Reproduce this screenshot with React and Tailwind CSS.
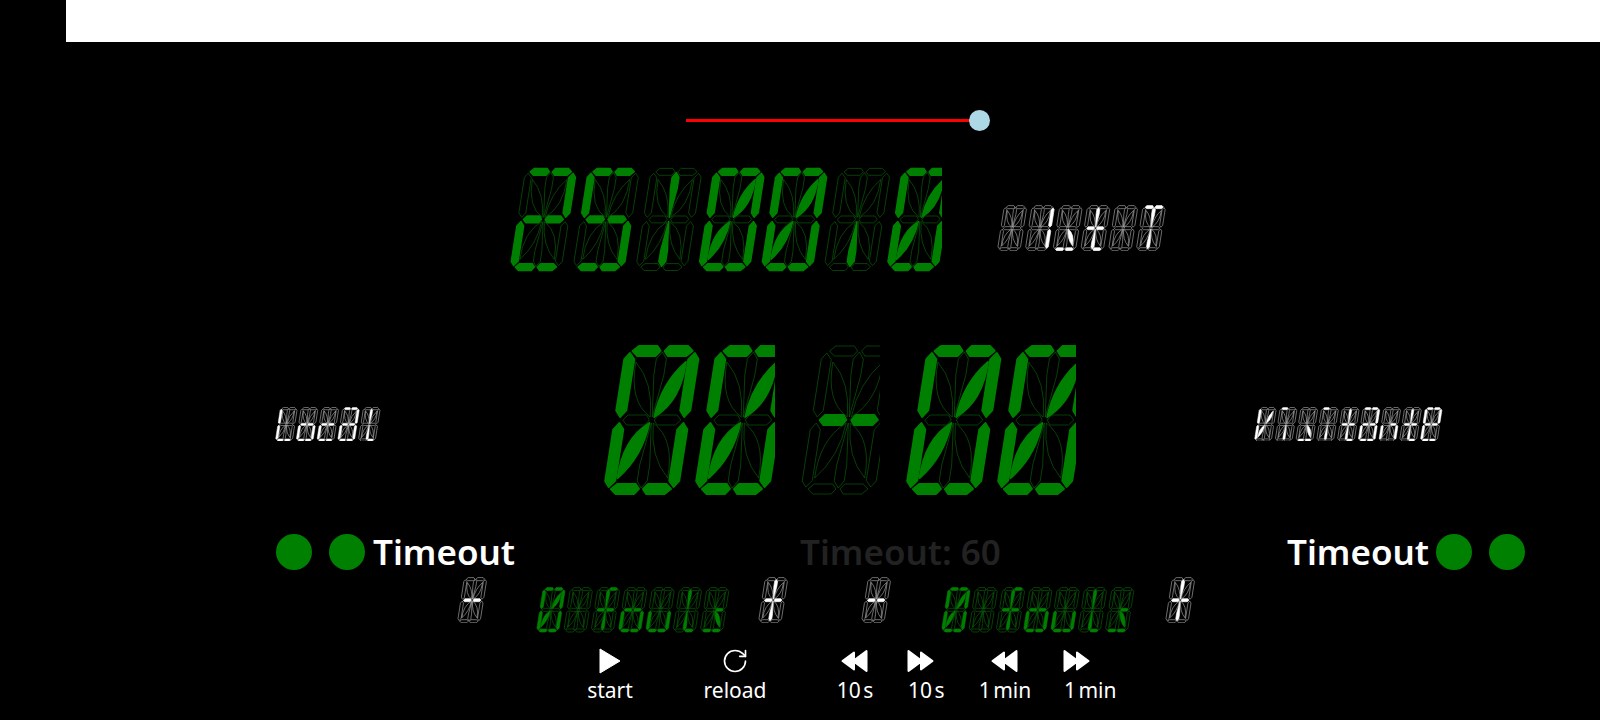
import React from "react";
import { RotateCw } from "lucide-react";

const SEGMENTS = {
  a1: "M8 6 L13.5 1 L32 1 L36 6 L32 11 L13.5 11 Z",
  a2: "M40 6 L44 1 L62.5 1 L68 6 L62.5 11 L44 11 Z",
  d1: "M8 144 L13.5 139 L32 139 L36 144 L32 149 L13.5 149 Z",
  d2: "M40 144 L44 139 L62.5 139 L68 144 L62.5 149 L44 149 Z",
  f: "M1 14 L5.5 8 L11 14.5 L11 65.5 L6 72 L1 65.5 Z",
  b: "M75 14 L70.5 8 L65 14.5 L65 65.5 L70 72 L75 65.5 Z",
  e: "M1 136 L5.5 142 L11 135.5 L11 84.5 L6 78 L1 84.5 Z",
  c: "M75 136 L70.5 142 L65 135.5 L65 84.5 L70 78 L75 84.5 Z",
  g1: "M9 75 L13.5 70 L32 70 L35.5 75 L32 80 L13.5 80 Z",
  g2: "M40.5 75 L44 70 L62.5 70 L67 75 L62.5 80 L44 80 Z",
  h: "M36 72 Q12 56 13 17 Q34 38 36 72 Z",
  j: "M40 72 Q64 56 63 17 Q42 38 40 72 Z",
  m: "M36 78 Q12 94 13 133 Q34 112 36 78 Z",
  k: "M40 78 Q64 94 63 133 Q42 112 40 78 Z",
  i: "M38 72 L33 30 L33 14 L38 7 L43 14 L43 30 Z",
  l: "M38 78 L33 120 L33 136 L38 143 L43 136 L43 120 Z",
};

const PITCH = 91;

// lit segments per character
const ZERO = "a1 a2 b c d1 d2 e f j m";
const BLANK = "";
const PLUS = "g1 g2 i l";
const MINUS = "g1 g2";
const T_LOW = "g1 g2 i l d2";
const A_LOW = "a1 a2 b c g1 g2 e d1 d2";

const Display = ({ chars, scale, tone = "green", clip }) => {
  const lit = tone === "green" ? "#008000" : "#ffffff";
  const line = tone === "green" ? "#0b6a0b" : "#b5b5b5";
  const w = clip ? clip / scale : chars.length * PITCH + 9;
  return (
    <svg
      className="block shrink-0"
      width={w * scale}
      height={152 * scale}
      viewBox={`0 -1 ${w} 152`}
    >
      {chars.map((on, idx) => {
        const active = on.split(" ");
        return (
          <g key={idx} transform={`translate(${idx * PITCH} 0) matrix(1 0 -0.157 1 23.55 0)`}>
            {Object.keys(SEGMENTS).map((name) =>
              active.includes(name) ? (
                <path key={name} d={SEGMENTS[name]} fill={lit} stroke={lit} strokeWidth="2" strokeLinejoin="round" />
              ) : (
                <path key={name} d={SEGMENTS[name]} fill="none" stroke={line} strokeWidth="0.6" vectorEffect="non-scaling-stroke" />
              ),
            )}
          </g>
        );
      })}
    </svg>
  );
};

const Dot = () => <div className="w-[36px] h-[36px] rounded-full bg-[#008000] shrink-0" />;

const Fouls = ({ clip }) => (
  <Display
    scale={0.3}
    clip={clip}
    chars={[ZERO, BLANK, "a2 g1 g2 i l", "g1 g2 e c d1 d2", "e c d1 d2", "i l d2", "g2 k d1 d2"]}
  />
);

const Play = () => (
  <svg width="22" height="26" viewBox="0 0 22 26" className="block">
    <path d="M1 1 L21 13 L1 25 Z" fill="#fff" stroke="#fff" strokeWidth="1" strokeLinejoin="round" />
  </svg>
);

const Back = () => (
  <svg width="28" height="24" viewBox="0 0 28 24" className="block">
    <path d="M1.5 12 L13 3.5 L13 20.5 Z M12 12 L25.5 2 L25.5 22 Z" fill="#fff" stroke="#fff" strokeWidth="2" strokeLinejoin="round" />
  </svg>
);

const Forward = () => (
  <svg width="28" height="24" viewBox="0 0 28 24" className="block -ml-[2px]">
    <path d="M2.5 2 L16 12 L2.5 22 Z M15 3.5 L26.5 12 L15 20.5 Z" fill="#fff" stroke="#fff" strokeWidth="2" strokeLinejoin="round" />
  </svg>
);

const Control = ({ icon, label, className }) => (
  <div className={`flex flex-col shrink-0 ${className}`}>
    <div className="h-[26px] flex items-center">{icon}</div>
    <span className="mt-[1px] text-[21px] leading-[30px] text-white whitespace-nowrap [word-spacing:-3px]">{label}</span>
  </div>
);

export default function App() {
  return (
    <div className="w-[1600px] h-[720px] bg-black overflow-hidden flex flex-col font-['Noto_Sans',sans-serif]">
      <div className="h-[42px] ml-[66px] bg-white shrink-0" />

      <div className="flex items-center ml-[686px] mt-[68px] h-[21px]">
        <div className="w-[284px] h-[3px] bg-[#ff0000]" />
        <div className="w-[21px] h-[21px] -ml-[1px] rounded-full bg-[#add8e6]" />
      </div>

      <div className="flex items-start ml-[509px] mt-[36px] h-[106px]">
        <Display
          scale={0.69}
          clip={433}
          chars={["a1 a2 b g1 g2 e d1 d2", "a1 a2 f g1 g2 c d1 d2", "i l", ZERO, ZERO, "l", ZERO]}
        />
        <div className="ml-[55px] mt-[38px]">
          <Display scale={0.305} tone="white" chars={[BLANK, "b c", "k d1 d2", T_LOW, BLANK, "a1 a2 i l"]} />
        </div>
      </div>

      <div className="flex items-center ml-[275px] mt-[71px] h-[152px]">
        <div className="mt-[8px]">
          <Display scale={0.228} tone="white" chars={["f e d1 d2", "g1 g2 e c d1 d2", "g1 g2 e d1 d2", A_LOW, "i l d2"]} />
        </div>
        <div className="ml-[221px]">
          <Display scale={1} clip={173} chars={[ZERO, ZERO]} />
        </div>
        <div className="ml-[24px]">
          <Display scale={1} clip={81} chars={[MINUS]} />
        </div>
        <div className="ml-[24px]">
          <Display scale={1} clip={172} chars={[ZERO, ZERO]} />
        </div>
        <div className="ml-[178px] mt-[8px]">
          <Display
            scale={0.228}
            tone="white"
            chars={["f e m j", "a1 l", "k d1 d2", "a1 l", T_LOW, A_LOW, "g2 e c", T_LOW, "a1 a2 b f g1 g2 e d1 d2"]}
          />
        </div>
      </div>

      <div className="flex items-center ml-[276px] mt-[38px] h-[36px]">
        <Dot />
        <div className="ml-[17px]">
          <Dot />
        </div>
        <span className="ml-[8px] w-[427px] text-[35px] leading-[36px] font-semibold text-white">Timeout</span>
        <span className="w-[487px] text-[35px] leading-[36px] font-semibold text-[#222222]">Timeout: 60</span>
        <span className="w-[149px] text-[35px] leading-[36px] font-semibold text-white">Timeout</span>
        <Dot />
        <div className="ml-[17px]">
          <Dot />
        </div>
      </div>

      <div className="flex items-start ml-[457px] mt-[7px] h-[57px]">
        <Display scale={0.305} tone="white" chars={[MINUS]} />
        <div className="ml-[48px] mt-[10px]">
          <Fouls clip={194} />
        </div>
        <div className="ml-[28px]">
          <Display scale={0.305} tone="white" chars={[PLUS]} />
        </div>
        <div className="ml-[73px]">
          <Display scale={0.305} tone="white" chars={[MINUS]} />
        </div>
        <div className="ml-[49px] mt-[10px]">
          <Fouls clip={198} />
        </div>
        <div className="ml-[26px]">
          <Display scale={0.305} tone="white" chars={[PLUS]} />
        </div>
      </div>

      <div className="flex items-start ml-[584px] mt-[14px]">
        <Control icon={<Play />} label="start" className="w-[52px] items-center" />
        <Control icon={<RotateCw size={28} strokeWidth={1.4} color="#fff" />} label="reload" className="w-[64px] ml-[67px] items-center" />
        <Control icon={<Back />} label="10 s" className="w-[40px] ml-[68px] items-center" />
        <Control icon={<Forward />} label="10 s" className="w-[40px] ml-[33px] items-start" />
        <Control icon={<Back />} label="1 min" className="w-[52px] ml-[31px] items-center" />
        <Control icon={<Forward />} label="1 min" className="w-[52px] ml-[33px] items-start" />
      </div>
    </div>
  );
}
